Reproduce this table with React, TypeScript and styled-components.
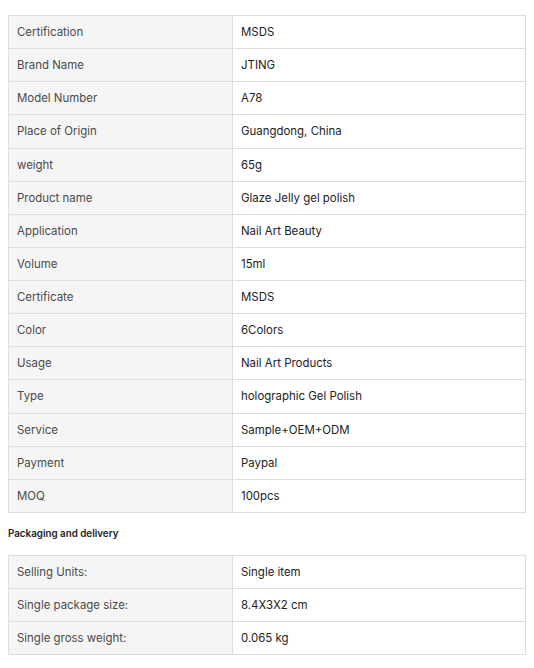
import React from "react";
import styled, { createGlobalStyle } from "styled-components";

const Global = createGlobalStyle`
  body {
    margin: 0;
    background: #fff;
    font-family: Inter, "Noto Sans", sans-serif;
  }
`;

const Page = styled.div`
  padding: 15px 8px 8px 8px;
  display: flex;
  flex-direction: column;
`;

const Table = styled.table`
  width: 518px;
  border-collapse: collapse;
  table-layout: fixed;
  font-size: 11.45px;
`;

const Label = styled.td`
  width: 207px;
  background: #f5f5f5;
  color: #4a4a4a;
  border: 1px solid #dddddd;
  padding: 7px 8px;
  line-height: 18.13px;
`;

const Value = styled.td`
  background: #fff;
  color: #222;
  border: 1px solid #dddddd;
  padding: 7px 8px;
  line-height: 18.13px;
`;

const Heading = styled.div`
  font-size: 9.8px;
  font-weight: 600;
  color: #222;
  margin: 15px 0 16px 0;
  line-height: 11px;
`;

const specs: [string, string][] = [
  ["Certification", "MSDS"],
  ["Brand Name", "JTING"],
  ["Model Number", "A78"],
  ["Place of Origin", "Guangdong, China"],
  ["weight", "65g"],
  ["Product name", "Glaze Jelly gel polish"],
  ["Application", "Nail Art Beauty"],
  ["Volume", "15ml"],
  ["Certificate", "MSDS"],
  ["Color", "6Colors"],
  ["Usage", "Nail Art Products"],
  ["Type", "holographic Gel Polish"],
  ["Service", "Sample+OEM+ODM"],
  ["Payment", "Paypal"],
  ["MOQ", "100pcs"],
];

const packaging: [string, string][] = [
  ["Selling Units:", "Single item"],
  ["Single package size:", "8.4X3X2 cm"],
  ["Single gross weight:", "0.065 kg"],
];

const SpecTable = ({ rows }: { rows: [string, string][] }) => (
  <Table>
    <tbody>
      {rows.map(([k, v]) => (
        <tr key={k}>
          <Label>{k}</Label>
          <Value>{v}</Value>
        </tr>
      ))}
    </tbody>
  </Table>
);

export default function App() {
  return (
    <>
      <Global />
      <Page>
        <SpecTable rows={specs} />
        <Heading>Packaging and delivery</Heading>
        <SpecTable rows={packaging} />
      </Page>
    </>
  );
}
